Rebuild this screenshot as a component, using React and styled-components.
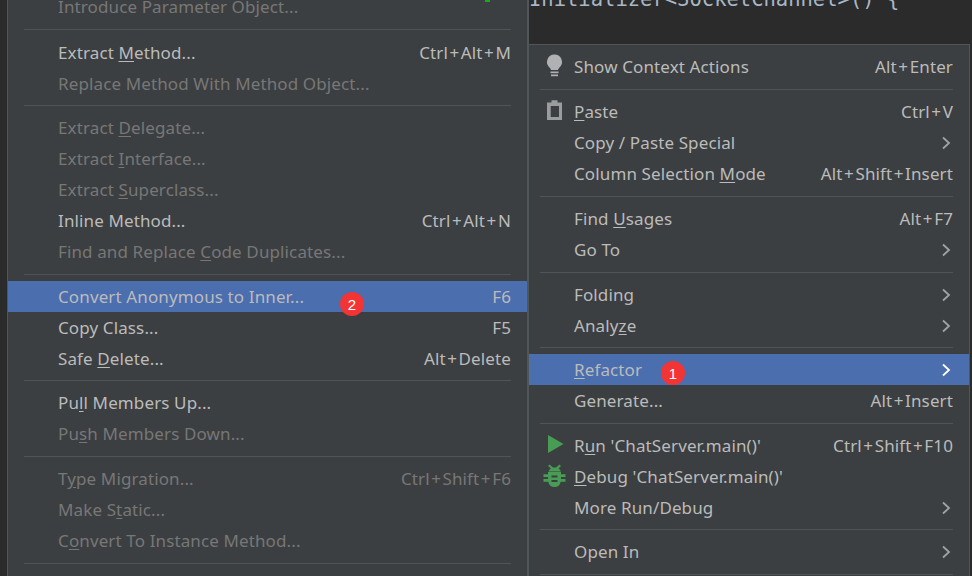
import React from "react";
import styled, { createGlobalStyle } from "styled-components";

const GlobalStyle = createGlobalStyle`
  html, body {
    margin: 0;
    padding: 0;
    background: #2b2b2b;
    overflow: hidden;
  }
`;

const leftItems = [
  { label: "Introduce Parameter Object...", off: true },
  { sep: 15 },
  { label: "Extract Method...", keyAt: 8, hint: "Ctrl+Alt+M" },
  { label: "Replace Method With Method Object...", off: true },
  { sep: 13 },
  { label: "Extract Delegate...", off: true, keyAt: 8 },
  { label: "Extract Interface...", off: true, keyAt: 8 },
  { label: "Extract Superclass...", off: true, keyAt: 8 },
  { label: "Inline Method...", hint: "Ctrl+Alt+N" },
  { label: "Find and Replace Code Duplicates...", off: true, keyAt: 17 },
  { sep: 14 },
  { label: "Convert Anonymous to Inner...", hint: "F6", active: true, badge: 2, badgeAt: 332, badgeTop: 11 },
  { label: "Copy Class...", hint: "F5" },
  { label: "Safe Delete...", hint: "Alt+Delete", keyAt: 5 },
  { sep: 13 },
  { label: "Pull Members Up...", keyAt: 2 },
  { label: "Push Members Down...", off: true, keyAt: 2 },
  { sep: 14 },
  { label: "Type Migration...", hint: "Ctrl+Shift+F6", off: true, keyAt: 1 },
  { label: "Make Static...", off: true, keyAt: 6 },
  { label: "Convert To Instance Method...", off: true, keyAt: 1 },
  { sep: 15 },
];

const rightItems = [
  { label: "Show Context Actions", hint: "Alt+Enter", icon: "bulb" },
  { sep: 14 },
  { label: "Paste", hint: "Ctrl+V", icon: "paste", keyAt: 0 },
  { label: "Copy / Paste Special", more: true },
  { label: "Column Selection Mode", hint: "Alt+Shift+Insert", keyAt: 17 },
  { sep: 14 },
  { label: "Find Usages", hint: "Alt+F7", keyAt: 5 },
  { label: "Go To", more: true },
  { sep: 14 },
  { label: "Folding", more: true },
  { label: "Analyze", more: true, keyAt: 5 },
  { sep: 13 },
  { label: "Refactor", more: true, active: true, keyAt: 0, badge: 1, badgeAt: 132, badgeTop: 7 },
  { label: "Generate...", hint: "Alt+Insert" },
  { sep: 14 },
  { label: "Run 'ChatServer.main()'", hint: "Ctrl+Shift+F10", icon: "run", keyAt: 1 },
  { label: "Debug 'ChatServer.main()'", icon: "debug", keyAt: 0 },
  { label: "More Run/Debug", more: true },
  { sep: 13 },
  { label: "Open In", more: true },
  { sep: 14 },
];

const Screen = styled.div`
  width: 972px;
  height: 576px;
  display: flex;
  align-items: flex-start;
  overflow: hidden;
  padding-left: 7px;
  box-sizing: border-box;
  background: #2b2b2b;
  font-family: "Noto Sans", sans-serif;
  font-size: 17px;
  letter-spacing: 0.12px;
`;

const LeftMenu = styled.div`
  position: relative;
  flex: 0 0 522px;
  height: 585px;
  margin-top: -9px;
  box-sizing: border-box;
  background: #3c3f41;
  border-left: 1px solid #515658;
  border-right: 2px solid #515658;
`;

const GreenTick = styled.span`
  position: absolute;
  left: 477px;
  top: 8px;
  width: 5px;
  height: 3px;
  background: #1fa81f;
`;

const RightColumn = styled.div`
  flex: 0 0 441px;
  display: flex;
  flex-direction: column;
`;

const CodeLine = styled.div`
  height: 44px;
  overflow: hidden;
`;

const CodeText = styled.div`
  margin-top: -15px;
  font-family: "DejaVu Sans Mono", monospace;
  font-size: 20.5px;
  letter-spacing: 0;
  line-height: 28px;
  color: #a9b7c6;
  white-space: pre;
`;

const RightMenu = styled.div`
  box-sizing: border-box;
  background: #3c3f41;
  border-top: 1px solid #515658;
  border-right: 1px solid #515658;
  padding-top: 6px;
`;

const Row = styled.div`
  position: relative;
  height: 31px;
  display: flex;
  align-items: center;
  box-sizing: border-box;
  padding-left: ${({ $inset }) => $inset}px;
  padding-right: ${({ $end }) => $end}px;
  background: ${({ $active }) => ($active ? "#4b6eaf" : "transparent")};
  color: ${({ $off }) => ($off ? "#777777" : "#bbbbbb")};
  white-space: pre;
`;

const Label = styled.span`
  flex: 1;
`;

const Mnemonic = styled.span`
  text-decoration: underline;
  text-underline-offset: 2px;
`;

const Hint = styled.span`
  color: ${({ $off }) => ($off ? "#777777" : "#bbbbbb")};
`;

const Plus = styled.span`
  margin: 0 1.5px;
`;

const IconSlot = styled.span`
  position: absolute;
  left: 12px;
  top: 3px;
  width: 26px;
  height: 26px;
`;

const Chevron = styled.svg`
  flex: none;
  width: 12px;
  height: 14px;
  margin-right: 1px;
`;

const Badge = styled.span`
  position: absolute;
  left: ${({ $at }) => $at}px;
  top: ${({ $top }) => $top}px;
  width: 24px;
  height: 24px;
  border-radius: 50%;
  background: #f33434;
  color: #ffffff;
  font-family: "Liberation Sans", sans-serif;
  font-size: 15px;
  display: flex;
  align-items: center;
  justify-content: center;
`;

const SepWrap = styled.div`
  height: ${({ $h }) => $h}px;
  display: flex;
  align-items: center;
  padding: 0 ${({ $end }) => $end}px 0 ${({ $start }) => $start}px;
`;

const SepLine = styled.div`
  flex: 1;
  height: 1px;
  background: #515355;
`;

const Icon = ({ name }) => {
  if (name === "bulb") {
    return (
      <svg width="26" height="26" viewBox="0 0 26 26" fill="#afb1b3">
        <path d="M13.5.5a7.5 7.5 0 0 0-4.6 13.4c.7.6 1 1.2 1.1 2.1h7c.1-.9.4-1.5 1.1-2.1A7.5 7.5 0 0 0 13.5.5z" />
        <rect x="9.5" y="17.5" width="8" height="1.7" />
        <rect x="10" y="20.5" width="7" height="1.7" />
      </svg>
    );
  }
  if (name === "paste") {
    return (
      <svg width="26" height="26" viewBox="0 0 26 26" fill="#9a9c9e">
        <path
          fillRule="evenodd"
          d="M6 3.5h4.5V1.2h6v2.3H21V21H6zM9.7 7v11H18V7z"
        />
      </svg>
    );
  }
  if (name === "run") {
    return (
      <svg width="26" height="26" viewBox="0 0 26 26" fill="#499c54">
        <path d="M7 2l15.500 9L7 20z" />
      </svg>
    );
  }
  return (
    <svg width="26" height="26" viewBox="0 0 26 26" fill="#499c54">
      <path d="M8.500 .5l3.500 3h3l3.500-3 1.500 1.500-2.500 2.500c1.200.7 2 1.700 2.300 3H7.700c.3-1.300 1.100-2.300 2.300-3L7 2z" />
      <path
        fillRule="evenodd"
        d="M7 8h13v2.200h4.500V13H20v2h4.500v2.800h-4.800A6.300 6.300 0 0 1 13.500 23a6.300 6.300 0 0 1-6.200-5.200H2.500V15H7v-2H2.500v-2.800H7zM10.500 11.500v2h6v-2zM10.500 16v2h6v-2z"
      />
    </svg>
  );
};

const Text = ({ label, keyAt }) => {
  if (keyAt === undefined) return label;
  return (
    <>
      {label.slice(0, keyAt)}
      <Mnemonic>{label[keyAt]}</Mnemonic>
      {label.slice(keyAt + 1)}
    </>
  );
};

const Shortcut = ({ hint, off }) => (
  <Hint $off={off}>
    {hint.split("+").map((part, i) => (
      <React.Fragment key={i}>
        {i > 0 && <Plus>+</Plus>}
        {part}
      </React.Fragment>
    ))}
  </Hint>
);

const MenuItems = ({ items, inset, end, sepStart }) =>
  items.map((it, i) =>
    it.sep ? (
      <SepWrap key={i} $h={it.sep} $start={sepStart} $end={end}>
        <SepLine />
      </SepWrap>
    ) : (
      <Row key={i} $inset={inset} $end={end} $active={it.active} $off={it.off}>
        {it.icon && (
          <IconSlot>
            <Icon name={it.icon} />
          </IconSlot>
        )}
        <Label>
          <Text label={it.label} keyAt={it.keyAt} />
        </Label>
        {it.hint && <Shortcut hint={it.hint} off={it.off} />}
        {it.more && (
          <Chevron viewBox="0 0 12 14">
            <path
              d="M3 1.500L9 7l-6 5.500"
              fill="none"
              stroke={it.active ? "#ffffff" : "#a0a2a4"}
              strokeWidth="1.8"
            />
          </Chevron>
        )}
        {it.badge && (
          <Badge $at={it.badgeAt} $top={it.badgeTop}>
            {it.badge}
          </Badge>
        )}
      </Row>
    )
  );

export default function App() {
  return (
    <>
      <GlobalStyle />
      <Screen>
        <LeftMenu>
          <GreenTick />
          <MenuItems items={leftItems} inset={50} end={16} sepStart={16} />
        </LeftMenu>
        <RightColumn>
          <CodeLine>
            <CodeText>{"Initializer<SocketChannel>() {"}</CodeText>
          </CodeLine>
          <RightMenu>
            <MenuItems items={rightItems} inset={45} end={16} sepStart={11} />
          </RightMenu>
        </RightColumn>
      </Screen>
    </>
  );
}
